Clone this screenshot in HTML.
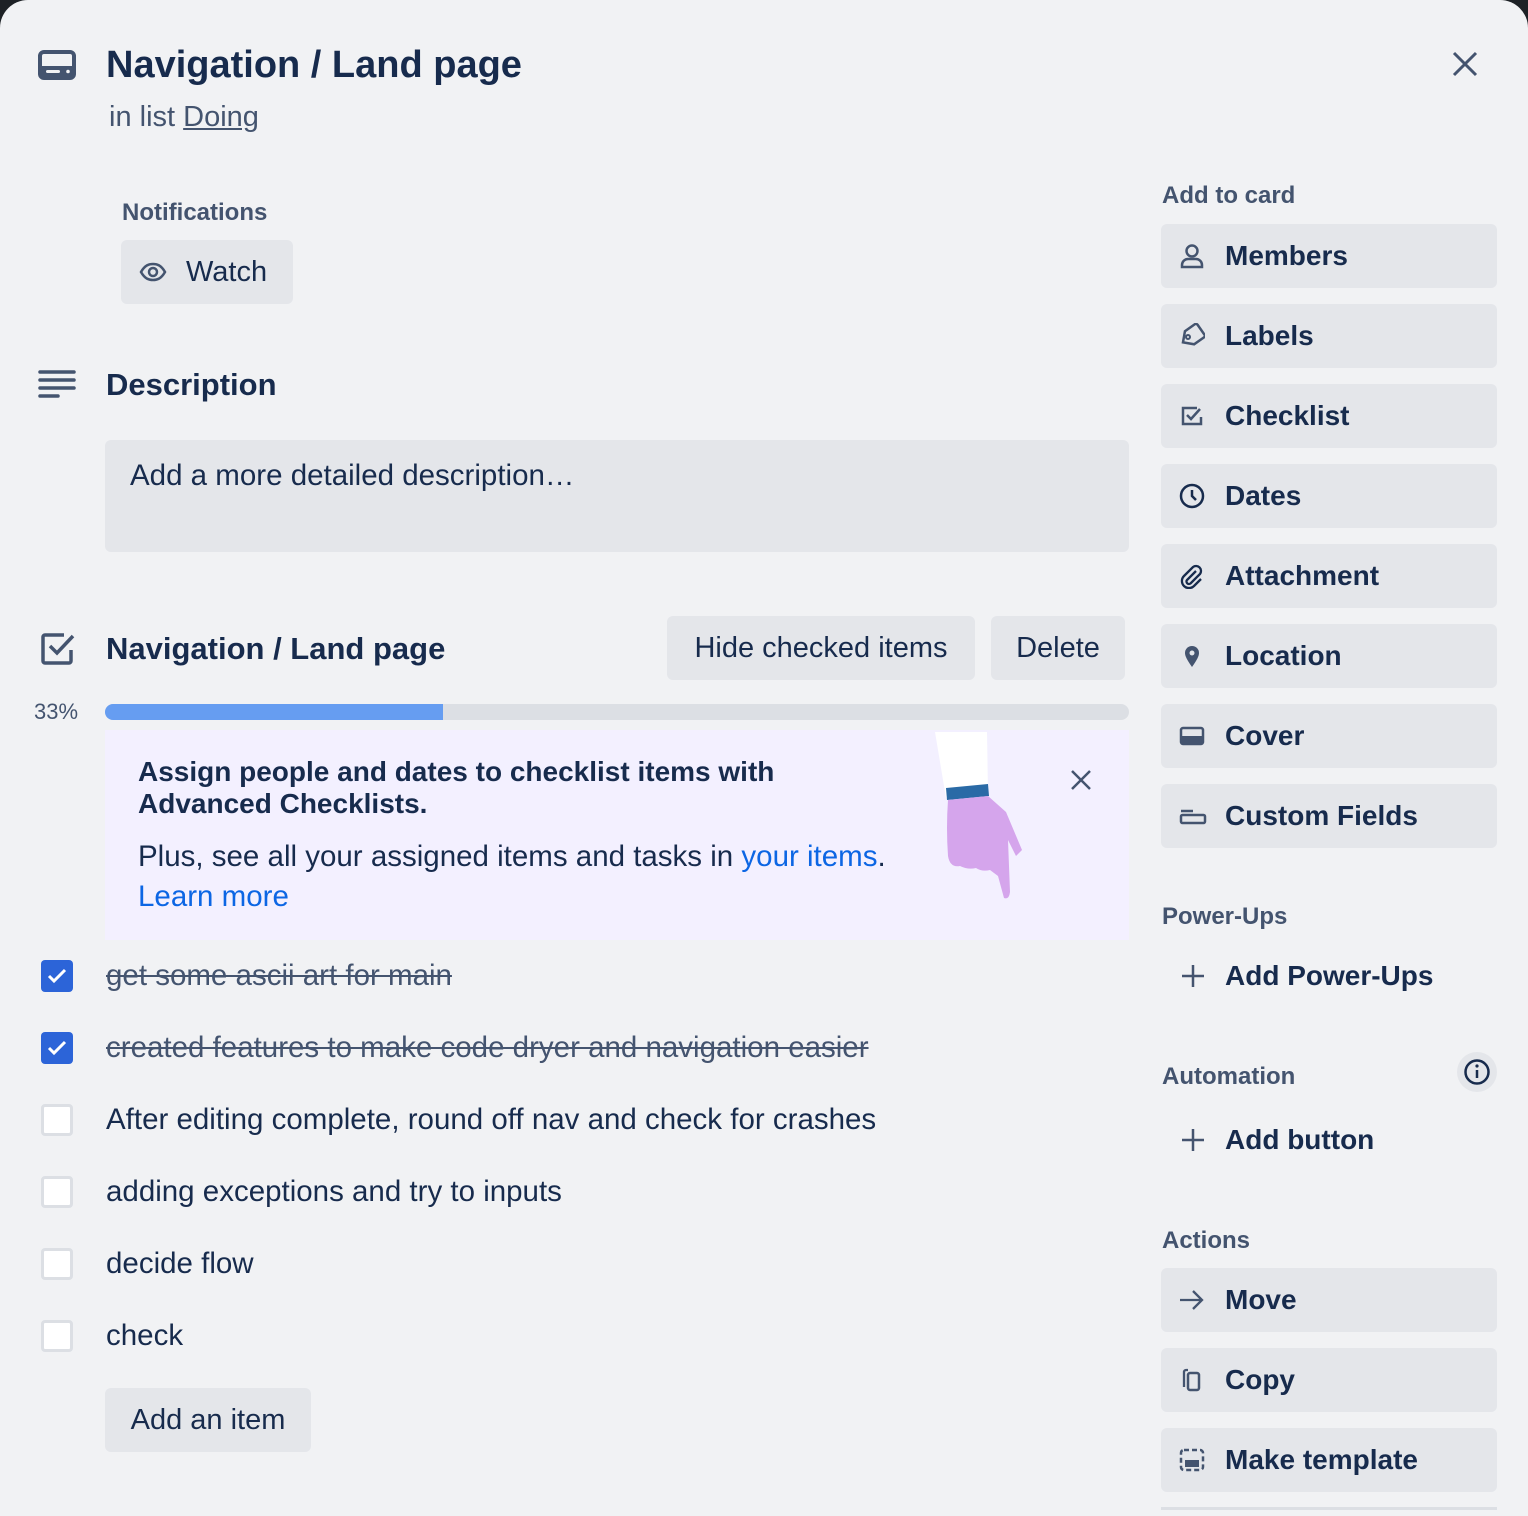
<!DOCTYPE html>
<html><head><meta charset="utf-8"><style>
*{margin:0;padding:0;box-sizing:border-box}
html,body{width:1528px;height:1516px;overflow:hidden;background:#1d2125}
#p{position:absolute;left:0;top:0;width:1528px;height:1516px;background:#f1f2f4;border-radius:28px 28px 0 0;font-family:"Liberation Sans",sans-serif;color:#172b4d}
.a{position:absolute;white-space:nowrap}
.btn{position:absolute;background:#e4e6ea;border-radius:6px;height:64px;line-height:64px;font-size:29px}
.sb{left:1161px;width:336px;font-weight:bold;font-size:28px}
.sb .t{position:absolute;left:64px}
.sb svg{position:absolute;left:18px;top:19px}
.lbl{font-size:24px;font-weight:bold;color:#44546f}
.cb{position:absolute;left:41px;width:32px;height:32px;border-radius:4px}
.un{background:#fff;border:3px solid #dcdfe4}
.ck{background:#2c64d8}
.it{position:absolute;left:106px;font-size:29.5px;line-height:32px;white-space:nowrap}
.st{text-decoration:line-through;color:#44546f}
</style></head><body><div id="p">
<svg class="a" style="left:38px;top:50px" width="38" height="30" viewBox="0 0 38 30"><rect x="2" y="2" width="34" height="26" rx="4" fill="none" stroke="#44546f" stroke-width="4"/><rect x="2" y="16" width="34" height="12" rx="2" fill="#44546f"/><rect x="8" y="20" width="14" height="3" rx="1.5" fill="#f1f2f4"/><circle cx="30" cy="21.5" r="1.8" fill="#f1f2f4"/></svg>
<div class="a" style="left:106px;top:42px;font-size:38px;font-weight:bold;line-height:46px">Navigation / Land page</div>
<div class="a" style="left:109px;top:100px;font-size:29px;color:#44546f;line-height:34px">in list <span style="text-decoration:underline">Doing</span></div>
<svg class="a" style="left:1452px;top:51px" width="26" height="26" viewBox="0 0 26 26"><path d="M2 2L24 24M24 2L2 24" stroke="#44546f" stroke-width="3"/></svg>

<div class="a lbl" style="left:122px;top:199px;line-height:28px">Notifications</div>
<div class="btn" style="left:121px;top:240px;width:172px"><svg class="a" style="left:18px;top:22px" width="28" height="20" viewBox="0 0 28 20"><path d="M2 10C6 3 10 2 14 2s8 1 12 8c-4 7-8 8-12 8S6 17 2 10z" fill="none" stroke="#44546f" stroke-width="2.5"/><circle cx="14" cy="10" r="4" fill="none" stroke="#44546f" stroke-width="2.5"/></svg><span class="a" style="left:65px">Watch</span></div>

<svg class="a" style="left:38px;top:370px" width="38" height="30" viewBox="0 0 38 30"><g stroke="#44546f" stroke-width="3.5" stroke-linecap="round"><path d="M2 2H36M2 10H36M2 18H36M2 26H20"/></g></svg>
<div class="a" style="left:106px;top:366px;font-size:31px;font-weight:bold;line-height:38px">Description</div>
<div class="a" style="left:105px;top:440px;width:1024px;height:112px;background:#e4e6ea;border-radius:6px"></div>
<div class="a" style="left:130px;top:459px;font-size:29.5px;line-height:34px">Add a more detailed description…</div>

<svg class="a" style="left:40px;top:632px" width="36" height="34" viewBox="0 0 36 34"><path d="M24 3H5a2 2 0 0 0-2 2v24a2 2 0 0 0 2 2h24a2 2 0 0 0 2-2V18" fill="none" stroke="#44546f" stroke-width="3.5"/><path d="M10 14l7 7L33 4" fill="none" stroke="#44546f" stroke-width="3.5"/></svg>
<div class="a" style="left:106px;top:630px;font-size:31px;font-weight:bold;line-height:38px">Navigation / Land page</div>
<div class="btn" style="left:667px;top:616px;width:308px;text-align:center">Hide checked items</div>
<div class="btn" style="left:991px;top:616px;width:134px;text-align:center">Delete</div>
<div class="a" style="left:34px;top:700px;font-size:22px;color:#44546f;line-height:24px">33%</div>
<div class="a" style="left:105px;top:704px;width:1024px;height:16px;background:#dcdfe4;border-radius:8px;overflow:hidden"><div style="width:338px;height:16px;background:#669df1"></div></div>

<div class="a" style="left:105px;top:730px;width:1024px;height:210px;background:#f3f0ff"></div>
<div class="a" style="left:138px;top:756px;font-size:28px;font-weight:bold;line-height:32px">Assign people and dates to checklist items with<br>Advanced Checklists.</div>
<div class="a" style="left:138px;top:840px;font-size:29.5px;line-height:34px">Plus, see all your assigned items and tasks in <span style="color:#0c66e4">your items</span>.</div>
<div class="a" style="left:138px;top:880px;font-size:29.5px;line-height:34px;color:#0c66e4">Learn more</div>
<svg class="a" style="left:930px;top:732px" width="100" height="172" viewBox="0 0 100 172"><path d="M5 0H57L58 62L16 66Z" fill="#fff"/><path d="M16 56L58 52L59 64L17 68Z" fill="#2a6aa6"/><path d="M18 68L58 64L76 80L92 118L86 124L78 108L80 160Q79 168 74 166L68 144L60 138Q52 140 46 136Q38 138 30 134Q20 136 18 124Q16 96 18 68Z" fill="#d5a5ec"/></svg>
<svg class="a" style="left:1071px;top:770px" width="20" height="20" viewBox="0 0 20 20"><path d="M1 1L19 19M19 1L1 19" stroke="#44546f" stroke-width="2.5"/></svg>

<div class="cb ck" style="top:960px"></div><svg class="a" style="left:47px;top:968px" width="20" height="16" viewBox="0 0 20 16"><path d="M2 8l5 5L18 2" fill="none" stroke="#fff" stroke-width="3"/></svg>
<div class="it st" style="top:960px">get some ascii art for main</div>
<div class="cb ck" style="top:1032px"></div><svg class="a" style="left:47px;top:1040px" width="20" height="16" viewBox="0 0 20 16"><path d="M2 8l5 5L18 2" fill="none" stroke="#fff" stroke-width="3"/></svg>
<div class="it st" style="top:1032px">created features to make code dryer and navigation easier</div>
<div class="cb un" style="top:1104px"></div><div class="it" style="top:1104px">After editing complete, round off nav and check for crashes</div>
<div class="cb un" style="top:1176px"></div><div class="it" style="top:1176px">adding exceptions and try to inputs</div>
<div class="cb un" style="top:1248px"></div><div class="it" style="top:1248px">decide flow</div>
<div class="cb un" style="top:1320px"></div><div class="it" style="top:1320px">check</div>
<div class="btn" style="left:105px;top:1388px;width:206px;text-align:center">Add an item</div>

<div class="a lbl" style="left:1162px;top:182px;line-height:28px">Add to card</div>
<div class="btn sb" style="top:224px"><svg width="26" height="26" viewBox="0 0 26 26"><circle cx="13" cy="8" r="5.5" fill="none" stroke="#44546f" stroke-width="2.5"/><path d="M3 24v-2a6 6 0 0 1 6-6h8a6 6 0 0 1 6 6v2z" fill="none" stroke="#44546f" stroke-width="2.5"/></svg><span class="t">Members</span></div>
<div class="btn sb" style="top:304px"><svg width="26" height="26" viewBox="0 0 26 26"><path d="M2 13L10 5h12a2 2 0 0 1 2 2v12a2 2 0 0 1-2 2H10z" fill="none" stroke="#44546f" stroke-width="2.5" transform="rotate(-35 13 13)"/><circle cx="9" cy="14" r="2" fill="none" stroke="#44546f" stroke-width="2"/></svg><span class="t">Labels</span></div>
<div class="btn sb" style="top:384px"><svg width="26" height="26" viewBox="0 0 26 26"><path d="M18 5H4v16h18v-7" fill="none" stroke="#44546f" stroke-width="2.5"/><path d="M8 12l4 4 9-10" fill="none" stroke="#44546f" stroke-width="2.5"/></svg><span class="t">Checklist</span></div>
<div class="btn sb" style="top:464px"><svg width="26" height="26" viewBox="0 0 26 26"><circle cx="13" cy="13" r="11" fill="none" stroke="#172b4d" stroke-width="2.5"/><path d="M13 7v6l4 4" fill="none" stroke="#172b4d" stroke-width="2.5"/></svg><span class="t">Dates</span></div>
<div class="btn sb" style="top:544px"><svg width="26" height="26" viewBox="0 0 26 26"><path d="M17 8l-9 9a2.5 2.5 0 0 0 3.5 3.5L21 11a5 5 0 0 0-7-7L5 13a7 7 0 0 0 10 10l7-7" fill="none" stroke="#172b4d" stroke-width="2.3"/></svg><span class="t">Attachment</span></div>
<div class="btn sb" style="top:624px"><svg width="26" height="26" viewBox="0 0 26 26"><path d="M13 24C8 17 6 13 6 10a7 7 0 0 1 14 0c0 3-2 7-7 14z" fill="#44546f"/><circle cx="13" cy="10" r="2.5" fill="#e4e6ea"/></svg><span class="t">Location</span></div>
<div class="btn sb" style="top:704px"><svg width="26" height="26" viewBox="0 0 26 26"><rect x="2" y="5" width="22" height="16" rx="2" fill="none" stroke="#44546f" stroke-width="2.5"/><rect x="2" y="13" width="22" height="8" fill="#44546f"/></svg><span class="t">Cover</span></div>
<div class="btn sb" style="top:784px"><svg width="28" height="26" viewBox="0 0 28 26"><path d="M2 8H14" stroke="#44546f" stroke-width="2.5"/><rect x="2" y="12" width="24" height="8" rx="1.5" fill="none" stroke="#44546f" stroke-width="2.5"/></svg><span class="t">Custom Fields</span></div>

<div class="a lbl" style="left:1162px;top:903px;line-height:28px">Power-Ups</div>
<svg class="a" style="left:1181px;top:964px" width="24" height="24" viewBox="0 0 24 24"><path d="M12 1v22M1 12h22" stroke="#44546f" stroke-width="2.5"/></svg>
<div class="a" style="left:1225px;top:959px;font-size:28px;font-weight:bold;line-height:34px">Add Power-Ups</div>

<div class="a lbl" style="left:1162px;top:1063px;line-height:28px">Automation</div>
<div class="a" style="left:1457px;top:1052px;width:40px;height:40px;border-radius:20px;background:#e4e6ea"></div>
<svg class="a" style="left:1463px;top:1058px" width="28" height="28" viewBox="0 0 28 28"><circle cx="14" cy="14" r="11.5" fill="none" stroke="#172b4d" stroke-width="2.5"/><path d="M14 12v8" stroke="#172b4d" stroke-width="2.5"/><circle cx="14" cy="8" r="1.6" fill="#172b4d"/></svg>
<svg class="a" style="left:1181px;top:1128px" width="24" height="24" viewBox="0 0 24 24"><path d="M12 1v22M1 12h22" stroke="#44546f" stroke-width="2.5"/></svg>
<div class="a" style="left:1225px;top:1123px;font-size:28px;font-weight:bold;line-height:34px">Add button</div>

<div class="a lbl" style="left:1162px;top:1227px;line-height:28px">Actions</div>
<div class="btn sb" style="top:1268px"><svg width="26" height="26" viewBox="0 0 26 26"><path d="M1 13H23M14 4l9 9-9 9" fill="none" stroke="#44546f" stroke-width="2.3"/></svg><span class="t">Move</span></div>
<div class="btn sb" style="top:1348px"><svg width="26" height="26" viewBox="0 0 26 26"><path d="M9 3H7a2 2 0 0 0-2 2v15" fill="none" stroke="#44546f" stroke-width="2.3"/><rect x="9" y="6" width="11" height="17" rx="2" fill="none" stroke="#44546f" stroke-width="2.5"/></svg><span class="t">Copy</span></div>
<div class="btn sb" style="top:1428px"><svg width="26" height="26" viewBox="0 0 26 26"><rect x="2" y="3" width="22" height="20" rx="3" fill="none" stroke="#44546f" stroke-width="2.5" stroke-dasharray="5 3"/><rect x="6" y="13" width="14" height="7" fill="#44546f"/></svg><span class="t">Make template</span></div>
<div class="a" style="left:1161px;top:1507px;width:336px;height:3px;background:#dcdfe4"></div>
</div></body></html>
